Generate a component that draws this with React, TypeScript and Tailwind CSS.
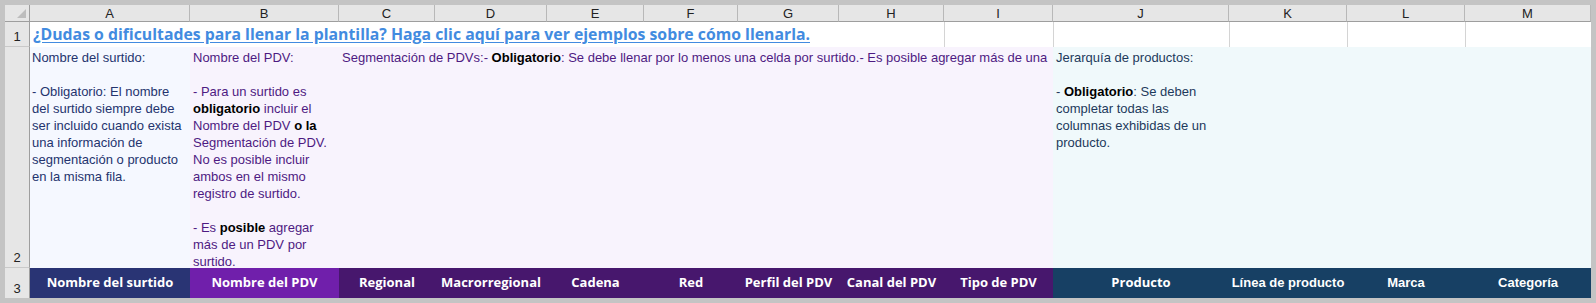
import React from 'react';

const cols = ['A', 'B', 'C', 'D', 'E', 'F', 'G', 'H', 'I', 'J', 'K', 'L', 'M'];

const sans = "font-['Liberation_Sans',Arial,sans-serif]";
const open = "font-['Open_Sans','Liberation_Sans',sans-serif]";

function Lines({ lines }: { lines: React.ReactNode[] }) {
  return (
    <>
      {lines.map((l, i) => (
        <div key={i} className="h-[17px] whitespace-nowrap">
          {l === '' ? '\u00a0' : l}
        </div>
      ))}
    </>
  );
}

const B = ({ children }: { children: React.ReactNode }) => (
  <span className="font-bold text-black">{children}</span>
);

export default function App() {
  return (
    <div className="w-[1596px] h-[303px] bg-[#c4c4c4] p-[5px] overflow-hidden">
      <div
        className={`grid grid-cols-[25px_160px_149px_96px_112px_97px_94px_101px_105px_109px_176px_118px_118px_126px] grid-rows-[17px_25px_221px_30px] ${sans} text-[13px]`}
      >
        {/* column headers */}
        <div className="relative bg-[#e6e6e6] border-r border-b border-[#9e9e9e]">
          <svg className="absolute right-[3px] bottom-[3px]" width="9" height="9" viewBox="0 0 9 9">
            <polygon points="9,0 9,9 0,9" fill="#bdbdbd" />
          </svg>
        </div>
        {cols.map((c) => (
          <div
            key={c}
            className="bg-[#e6e6e6] border-r border-r-[#b8b8b8] border-b border-b-[#9e9e9e] flex items-center justify-center text-[#222] leading-none"
          >
            {c}
          </div>
        ))}

        {/* row 1 */}
        <div className="bg-[#e6e6e6] border-r border-r-[#9e9e9e] border-b border-b-[#c9c9c9] flex items-end justify-center pb-[3px] text-[#222] leading-none">
          1
        </div>
        <div className="col-span-8 bg-white flex items-center pl-[3px] overflow-hidden">
          <a
            href="#"
            className={`${open} font-bold text-[15.8px] text-[#428be0] underline underline-offset-[2px] whitespace-nowrap leading-none`}
          >
            ¿Dudas o dificultades para llenar la plantilla? Haga clic aquí para ver ejemplos sobre cómo llenarla.
          </a>
        </div>
        <div className="bg-white border-l border-[#d4d4d4]" />
        <div className="bg-white border-l border-[#d4d4d4]" />
        <div className="bg-white border-l border-[#d4d4d4]" />
        <div className="bg-white border-l border-[#d4d4d4]" />
        <div className="bg-white border-l border-[#d4d4d4]" />

        {/* row 2 */}
        <div className="bg-[#e6e6e6] border-r border-r-[#9e9e9e] border-b border-b-[#c9c9c9] flex items-end justify-center pb-[3px] text-[#222] leading-none">
          2
        </div>
        <div className="bg-[#f5f8ff] text-[#24346e] pl-[2px] pt-[1px] overflow-hidden">
          <Lines
            lines={[
              'Nombre del surtido:',
              '',
              '- Obligatorio: El nombre',
              'del surtido siempre debe',
              'ser incluido cuando exista',
              'una información de',
              'segmentación o producto',
              'en la misma fila.',
            ]}
          />
        </div>
        <div className="bg-[#f8f3fd] text-[#4e1a82] pl-[3px] pt-[1px] overflow-hidden">
          <Lines
            lines={[
              'Nombre del PDV:',
              '',
              '- Para un surtido es',
              <><B>obligatorio</B> incluir el</>,
              <>Nombre del PDV <B>o la</B></>,
              'Segmentación de PDV.',
              'No es posible incluir',
              'ambos en el mismo',
              'registro de surtido.',
              '',
              <>- Es <B>posible</B> agregar</>,
              'más de un PDV por',
              'surtido.',
            ]}
          />
        </div>
        <div className="col-span-7 bg-[#f8f3fd] text-[#4e1a82] pl-[3px] pt-[1px] overflow-hidden">
          <Lines
            lines={[
              <>
                Segmentación de PDVs:- <B>Obligatorio</B>: Se debe llenar por lo menos una celda por surtido.- Es
                posible agregar más de una
              </>,
            ]}
          />
        </div>
        <div className="col-span-4 bg-[#f0f9fb] text-[#1d3a5c] pl-[3px] pt-[1px] overflow-hidden">
          <Lines
            lines={[
              'Jerarquía de productos:',
              '',
              <>- <B>Obligatorio</B>: Se deben</>,
              'completar todas las',
              'columnas exhibidas de un',
              'producto.',
            ]}
          />
        </div>

        {/* row 3 */}
        <div className="bg-[#e6e6e6] border-r border-r-[#9e9e9e] flex items-end justify-center pb-[3px] text-[#222] leading-none">
          3
        </div>
        <div className={`bg-[#293474] text-white ${open} font-bold flex items-center justify-center`}>
          Nombre del surtido
        </div>
        <div className={`bg-[#701fab] text-white ${open} font-bold flex items-center justify-center`}>
          Nombre del PDV
        </div>
        {['Regional', 'Macrorregional', 'Cadena', 'Red', 'Perfil del PDV', 'Canal del PDV', 'Tipo de PDV'].map((t) => (
          <div key={t} className={`bg-[#47176d] text-white ${open} font-bold flex items-center justify-center whitespace-nowrap`}>
            {t}
          </div>
        ))}
        <div className={`bg-[#174064] text-white ${open} font-bold flex items-center justify-center`}>Producto</div>
        {['Línea de producto', 'Marca', 'Categoría'].map((t) => (
          <div key={t} className="bg-[#174064] text-white font-bold flex items-center justify-center whitespace-nowrap">
            {t}
          </div>
        ))}
      </div>
    </div>
  );
}
